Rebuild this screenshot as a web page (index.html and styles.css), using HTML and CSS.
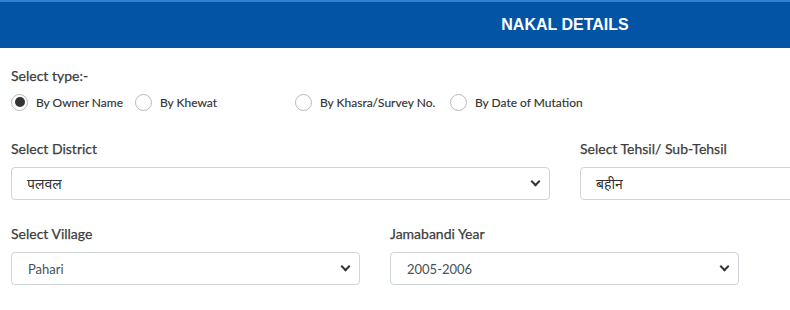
FILE: index.html
```html
<!DOCTYPE html>
<html lang="en">
<head>
<meta charset="utf-8">
<title>Nakal Details</title>
<link rel="stylesheet" href="styles.css">
</head>
<body>
<div class="page">
  <header class="banner"><h1 class="banner-title">NAKAL DETAILS</h1></header>
  <section class="form">
    <div class="type-block">
      <div class="label">Select type:-</div>
      <div class="radios">
        <label class="radio r1"><input type="radio" name="t" checked><span>By Owner Name</span></label>
        <label class="radio r2"><input type="radio" name="t"><span>By Khewat</span></label>
        <label class="radio r3"><input type="radio" name="t"><span>By Khasra/Survey No.</span></label>
        <label class="radio r4"><input type="radio" name="t"><span>By Date of Mutation</span></label>
      </div>
    </div>
    <div class="row row-half">
      <div class="field">
        <div class="label">Select District</div>
        <div class="select"><span class="value hi">पलवल</span><span class="chev"></span></div>
      </div>
      <div class="field">
        <div class="label">Select Tehsil/ Sub-Tehsil</div>
        <div class="select"><span class="value hi">बहीन</span><span class="chev"></span></div>
      </div>
    </div>
    <div class="row row-third">
      <div class="field">
        <div class="label">Select Village</div>
        <div class="select"><span class="value">Pahari</span><span class="chev"></span></div>
      </div>
      <div class="field">
        <div class="label">Jamabandi Year</div>
        <div class="select"><span class="value">2005-2006</span><span class="chev"></span></div>
      </div>
      <div class="field"></div>
    </div>
  </section>
</div>
</body>
</html>
```

FILE: styles.css
```css
html, body {
  margin: 0;
  padding: 0;
  background: #fff;
  overflow: hidden;
}
body {
  font-family: "Lato", "Open Sans", sans-serif;
  color: #444;
}
.page {
  width: 1138px;
  margin-left: -4px;
}
.banner {
  height: 48px;
  background: #0454a5;
  border-top: 2px solid #2f80d4;
  box-sizing: border-box;
  display: flex;
  align-items: center;
  justify-content: center;
}
.banner-title {
  margin: 0;
  font-family: "Liberation Sans", Arial, sans-serif;
  font-weight: bold;
  font-size: 16px;
  color: #fff;
}
.form {
  padding-top: 18px;
}
.type-block {
  padding-left: 15px;
}
.label {
  font-size: 14px;
  color: #3d3d3d;
  line-height: 20px;
  -webkit-text-stroke: 0.25px #3d3d3d;
}
.type-block .label {
  margin-bottom: 6px;
}
.radios {
  display: flex;
  align-items: center;
  height: 20px;
}
.radio {
  display: flex;
  align-items: center;
  font-size: 12px;
  color: #333;
  -webkit-text-stroke: 0.15px #333;
}
.r1 { width: 124px; }
.r2 { width: 160px; }
.r3 { width: 155px; }
.radio input {
  appearance: none;
  -webkit-appearance: none;
  margin: 0 8px 0 0;
  width: 17px;
  height: 17px;
  border: 1px solid #b8b8b8;
  border-radius: 50%;
  background: #fff;
  box-sizing: border-box;
  display: grid;
  place-items: center;
}
.radio input:checked::after {
  content: "";
  width: 10px;
  height: 10px;
  border-radius: 50%;
  background: #333;
}
.row {
  display: flex;
}
.row-half { margin-top: 27px; }
.row-third { margin-top: 24px; }
.field {
  flex: 0 0 auto;
  box-sizing: border-box;
  padding: 0 15px;
}
.row-half .field { width: 569px; }
.row-third .field { width: 379px; }
.field .label {
  margin-bottom: 8px;
}
.select {
  height: 33px;
  box-sizing: border-box;
  border: 1px solid #ced4da;
  border-radius: 4px;
  display: flex;
  align-items: center;
  justify-content: space-between;
  padding: 0 10px 0 15px;
  background: #fff;
}
.value {
  font-size: 13px;
  color: #495057;
  padding-left: 1px;
}
.value.hi {
  font-family: "Noto Sans", "Lato", sans-serif;
  font-size: 14px;
  color: #333;
  padding-left: 0;
}
.chev {
  width: 5px;
  height: 5px;
  border-right: 2px solid #333;
  border-bottom: 2px solid #333;
  transform: rotate(45deg);
  margin-top: -4px;
}
```
